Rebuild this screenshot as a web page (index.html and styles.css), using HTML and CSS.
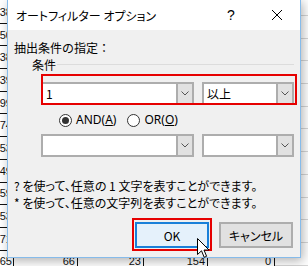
FILE: index.html
```html
<!DOCTYPE html>
<html lang="ja">
<head>
    <title>オートフィルター オプション</title>
    <meta charset="UTF-8">
    <link rel="stylesheet" href="styles.css">
</head>
<body>
<div class="screen">

    <!-- лист за окном -->
    <div class="sheet">
        <div class="row"><span class="c">38</span><span class="c"></span><span class="c"></span><span class="c"></span><span class="c"></span></div>
        <div class="row"><span class="c">50</span><span class="c"></span><span class="c"></span><span class="c"></span><span class="c"></span></div>
        <div class="row"><span class="c">38</span><span class="c"></span><span class="c"></span><span class="c"></span><span class="c"></span></div>
        <div class="row"><span class="c">39</span><span class="c"></span><span class="c"></span><span class="c"></span><span class="c"></span></div>
        <div class="row"><span class="c">99</span><span class="c"></span><span class="c"></span><span class="c"></span><span class="c"></span></div>
        <div class="row"><span class="c">74</span><span class="c"></span><span class="c"></span><span class="c"></span><span class="c"></span></div>
        <div class="row"><span class="c">53</span><span class="c"></span><span class="c"></span><span class="c"></span><span class="c"></span></div>
        <div class="row"><span class="c">49</span><span class="c"></span><span class="c"></span><span class="c"></span><span class="c"></span></div>
        <div class="row"><span class="c">59</span><span class="c"></span><span class="c"></span><span class="c"></span><span class="c"></span></div>
        <div class="row"><span class="c">53</span><span class="c"></span><span class="c"></span><span class="c"></span><span class="c"></span></div>
        <div class="row"><span class="c">71</span><span class="c"></span><span class="c"></span><span class="c"></span><span class="c"></span></div>
        <div class="row"><span class="c">65</span><span class="c">66</span><span class="c">23</span><span class="c">154</span><span class="c">0</span></div>
    </div>

    <div class="dialog">
        <div class="titlebar">
            <span class="title">オートフィルター オプション</span>
            <span class="caption-btn help">?</span>
            <span class="caption-btn close">
                <svg width="10" height="10" viewBox="0 0 10 10"><path d="M0 0L10 10M10 0L0 10" stroke="#000" stroke-width="1"/></svg>
            </span>
        </div>

        <div class="dialog-body">
            <div class="label">抽出条件の指定：</div>
            <div class="group-head"><span>条件</span></div>

            <div class="cond-row">
                <div class="combo combo-value">
                    <span class="combo-text">1</span>
                    <span class="combo-btn"><svg width="8" height="5" viewBox="0 0 8 5"><path d="M0.5 0.5L4 4L7.5 0.5" fill="none" stroke="#555"/></svg></span>
                </div>
                <div class="combo combo-op">
                    <span class="combo-text">以上</span>
                    <span class="combo-btn"><svg width="8" height="5" viewBox="0 0 8 5"><path d="M0.5 0.5L4 4L7.5 0.5" fill="none" stroke="#555"/></svg></span>
                </div>
            </div>

            <div class="radio-row">
                <span class="radio checked"><span class="radio-dot"></span><span>AND(<u>A</u>)</span></span>
                <span class="radio"><span class="radio-dot"></span><span>OR(<u>O</u>)</span></span>
            </div>

            <div class="cond-row second">
                <div class="combo combo-value">
                    <span class="combo-text"></span>
                    <span class="combo-btn"><svg width="8" height="5" viewBox="0 0 8 5"><path d="M0.5 0.5L4 4L7.5 0.5" fill="none" stroke="#555"/></svg></span>
                </div>
                <div class="combo combo-op">
                    <span class="combo-text"></span>
                    <span class="combo-btn"><svg width="8" height="5" viewBox="0 0 8 5"><path d="M0.5 0.5L4 4L7.5 0.5" fill="none" stroke="#555"/></svg></span>
                </div>
            </div>

            <div class="hints">
                <p>? を使って、任意の 1 文字を表すことができます。</p>
                <p>* を使って、任意の文字列を表すことができます。</p>
            </div>

            <div class="buttons">
                <button class="btn btn-default">OK</button>
                <button class="btn">キャンセル</button>
            </div>
        </div>
    </div>

    <!-- красные рамки поверх окна -->
    <div class="mark mark-cond"></div>
    <div class="mark mark-ok"></div>

    <svg class="cursor" width="13" height="21" viewBox="0 0 13 21">
        <path d="M0.5 0.5V16.5L4.5 12.8L7.2 19.3L9.6 18.3L7 12H12Z" fill="#fff" stroke="#000" stroke-width="1" stroke-linejoin="round"/>
    </svg>
</div>
</body>
</html>
```

FILE: styles.css
```css
* {
    box-sizing: border-box;
}

body {
    margin: 0;
    background: #fff;
    font-family: 'Noto Sans CJK JP', sans-serif;
}

.screen {
    position: relative;
    width: 308px;
    height: 266px;
    overflow: hidden;
    background: #fff;
}

/* лист */
.sheet {
    padding-top: 1px;
    font-family: 'Liberation Sans', Arial, sans-serif;
    font-size: 11px;
    color: #111;
}

.row {
    display: flex;
    height: 22.7px;
    background: linear-gradient(#d6d6d6, #d6d6d6) no-repeat right 0 top 14px / 34px 1px;
}

.c {
    display: flex;
    align-items: center;
    justify-content: flex-end;
    width: 64px;
    height: 100%;
    padding-right: 2px;
    border-right: 1px solid #111;
    border-bottom: 1px solid #111;
}

.c:nth-child(1) {
    width: 14px;
    padding-right: 1px;
}

.c:nth-child(3) {
    width: 66px;
}

.c:nth-child(5) {
    width: 67px;
    padding-right: 3px;
}

/* окно */
.dialog {
    position: absolute;
    left: 7px;
    top: -1px;
    width: 294px;
    height: 259px;
    display: flex;
    flex-direction: column;
    background: #f0f0f0;
    border: 1px solid #86bbea;
    box-shadow: 2px 3px 10px rgba(0, 0, 0, 0.3);
    font-size: 12px;
    font-feature-settings: "palt";
    color: #000;
}

.titlebar {
    display: flex;
    align-items: center;
    height: 30px;
    background: #fff;
}

.title {
    flex: 1;
    padding-left: 8px;
}

.caption-btn {
    display: flex;
    align-items: center;
    justify-content: center;
    width: 46px;
    height: 30px;
}

.help {
    font-family: 'Liberation Sans', sans-serif;
    font-size: 14px;
}

.dialog-body {
    flex: 1;
    padding: 10px 6px 0 6px;
}

.label {
    line-height: 16px;
    font-feature-settings: normal;
}

.group-head {
    display: flex;
    align-items: center;
    height: 17px;
    margin-left: 18px;
    line-height: 16px;
}

.group-head::after {
    content: "";
    flex: 1;
    margin-left: 1px;
    border-top: 1px solid #dcdcdc;
}

.cond-row {
    display: flex;
    gap: 8px;
    height: 23px;
    margin: 9px 0 0 27px;
}

.cond-row.second {
    margin-top: 6px;
}

.combo {
    display: flex;
    background: #fff;
    border: 2px solid #adadad;
}

.combo-value {
    width: 153px;
}

.combo-op {
    width: 92px;
}

.combo-text {
    flex: 1;
    padding-left: 3px;
    line-height: 19px;
}

.combo-btn {
    display: flex;
    align-items: center;
    justify-content: center;
    width: 16px;
    background: #e1e1e1;
    border-left: 2px solid #adadad;
}

.radio-row {
    display: flex;
    align-items: center;
    height: 16px;
    margin: 7px 0 0 45px;
    line-height: 16px;
    font-family: 'Noto Sans', 'Noto Sans CJK JP', sans-serif;
}

.radio {
    display: flex;
    align-items: center;
    gap: 4px;
    margin-right: 11px;
}

.radio-dot {
    display: flex;
    align-items: center;
    justify-content: center;
    width: 13px;
    height: 13px;
    border: 1px solid #333;
    border-radius: 50%;
    background: #fff;
}

.radio.checked .radio-dot::after {
    content: "";
    width: 7px;
    height: 7px;
    border-radius: 50%;
    background: #333;
}

.hints {
    margin-top: 20px;
}

.hints p {
    margin: 0;
    line-height: 17px;
}

.buttons {
    display: flex;
    justify-content: flex-end;
    gap: 10px;
    margin: 11px 1px 0 0;
}

.btn {
    width: 74px;
    height: 26px;
    padding: 0;
    font: inherit;
    color: #000;
    background: #e1e1e1;
    border: 2px solid #adadad;
}

.btn-default {
    background: #e5f1fb;
    border-color: #1a80d9;
}

/* пометки */
.mark {
    position: absolute;
    border: 2px solid #e60000;
    pointer-events: none;
}

.mark-cond {
    left: 41px;
    top: 74px;
    width: 256px;
    height: 31px;
}

.mark-ok {
    left: 132px;
    top: 218px;
    width: 80px;
    height: 33px;
}

.cursor {
    position: absolute;
    left: 197px;
    top: 238px;
}
```
